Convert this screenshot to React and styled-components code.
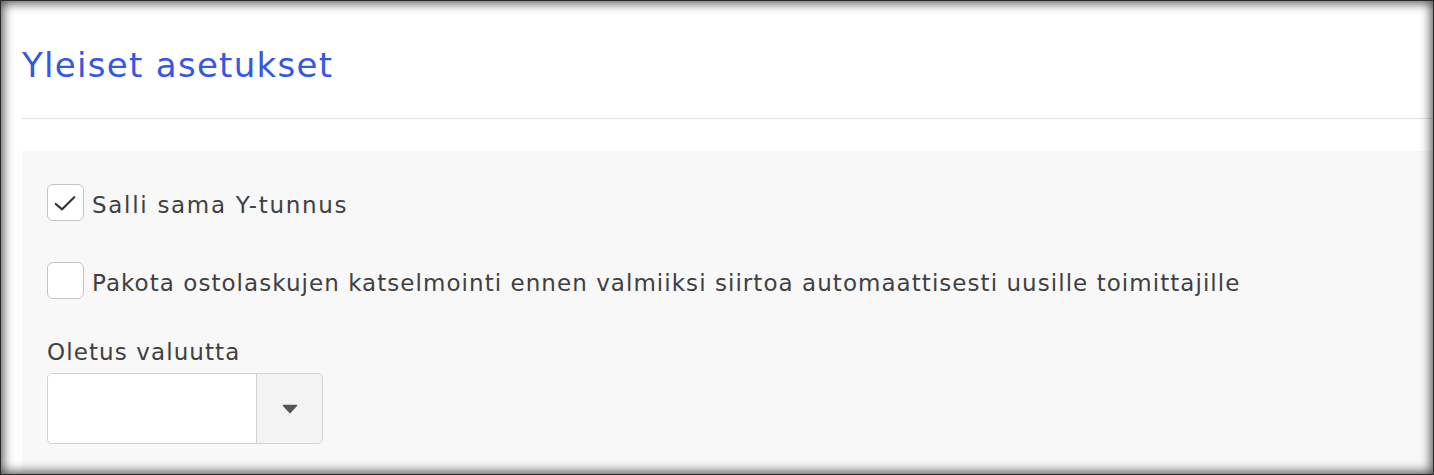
import React, { useState } from "react";
import styled, { createGlobalStyle } from "styled-components";

const Global = createGlobalStyle`
  html, body { margin: 0; padding: 0; background: #fff; }
  body { font-family: "DejaVu Sans", "Open Sans", sans-serif; }
  * { box-sizing: border-box; }
`;

const Frame = styled.div`
  position: relative;
  width: 1434px;
  height: 475px;
  overflow: hidden;
  background: #fff;
  padding-left: 22px;
  &::after {
    content: "";
    position: absolute;
    inset: 0;
    pointer-events: none;
    box-shadow: inset 0 0 0 1px #2a2a2a, inset 0 0 11px 3px rgba(0, 0, 0, 0.7);
  }
`;

const Header = styled.div`
  height: 119px;
  border-bottom: 1px solid #e2e2e2;
  display: flex;
  align-items: flex-start;
  padding-top: 41px;
`;

const Title = styled.h1`
  margin: 0;
  font-size: 34px;
  font-weight: 400;
  line-height: 48px;
  letter-spacing: 1.3px;
  color: #3457e5;
`;

const Panel = styled.div`
  margin-top: 32px;
  background: #f8f8f8;
  height: 400px;
  padding: 33px 25px;
  display: flex;
  flex-direction: column;
`;

const CheckRow = styled.label`
  display: flex;
  align-items: center;
  gap: 8px;
  margin-bottom: ${(p) => p.$mb}px;
  cursor: pointer;
`;

const Box = styled.span`
  width: 37px;
  height: 37px;
  border: 1.5px solid #c4c4c4;
  border-radius: 6px;
  background: #fff;
  display: flex;
  align-items: center;
  justify-content: center;
  flex-shrink: 0;
`;

const Text = styled.span`
  font-size: 23px;
  color: #404040;
  line-height: 30px;
  margin-top: 4px;
  letter-spacing: ${(p) => p.$ls ?? 1}px;
  white-space: nowrap;
`;

const FieldLabel = styled.div`
  font-size: 23px;
  color: #404040;
  line-height: 30px;
  letter-spacing: 1.1px;
  margin-bottom: 6px;
`;

const Select = styled.div`
  width: 276px;
  height: 71px;
  border: 1.5px solid #d2d2d2;
  border-radius: 5px;
  background: #fff;
  display: flex;
  overflow: hidden;
`;

const SelectValue = styled.div`
  flex: 1;
`;

const SelectArrow = styled.div`
  width: 66px;
  border-left: 1.5px solid #d2d2d2;
  background: #f3f3f3;
  display: flex;
  align-items: center;
  justify-content: center;
`;

function Checkbox({ checked, onToggle }) {
  return (
    <Box onClick={onToggle}>
      {checked && (
        <svg width="36" height="36" viewBox="0 0 36 36">
          <path d="M8 19 L14.5 24.5 L27 12" fill="none" stroke="#333" strokeWidth="2.2" strokeLinecap="round" strokeLinejoin="round" />
        </svg>
      )}
    </Box>
  );
}

export default function App() {
  const [a, setA] = useState(true);
  const [b, setB] = useState(false);
  return (
    <>
      <Global />
      <Frame>
        <Header>
          <Title>Yleiset asetukset</Title>
        </Header>
        <Panel>
          <CheckRow $mb={41}>
            <Checkbox checked={a} onToggle={() => setA(!a)} />
            <Text $ls={1.7}>Salli sama Y-tunnus</Text>
          </CheckRow>
          <CheckRow $mb={38}>
            <Checkbox checked={b} onToggle={() => setB(!b)} />
            <Text $ls={1.05}>Pakota ostolaskujen katselmointi ennen valmiiksi siirtoa automaattisesti uusille toimittajille</Text>
          </CheckRow>
          <FieldLabel>Oletus valuutta</FieldLabel>
          <Select>
            <SelectValue />
            <SelectArrow>
              <svg width="16" height="10" viewBox="0 0 16 10">
                <path d="M1.5 1.5 H14.5 L8 8.5 Z" fill="#555" stroke="#555" strokeWidth="1.5" strokeLinejoin="round" />
              </svg>
            </SelectArrow>
          </Select>
        </Panel>
      </Frame>
    </>
  );
}
